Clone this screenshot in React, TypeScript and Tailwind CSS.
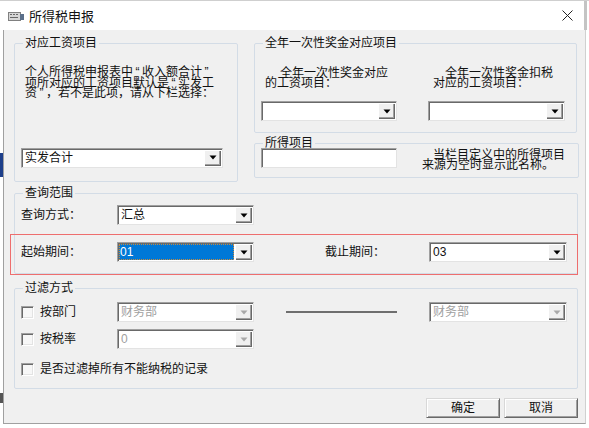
type ComboProps = {
  className: string;
  text?: string;
  disabled?: boolean;
  selected?: boolean;
};

function DropButton({ disabled }: { disabled?: boolean }) {
  return (
    <div className="flex h-full w-[17px] shrink-0 items-center justify-center bg-[#f0f0f0] shadow-[inset_1px_1px_0_#ffffff,inset_-1px_-1px_0_#696969,inset_-2px_-2px_0_#a0a0a0]">
      <svg width="8" height="5" viewBox="0 0 8 5">
        <polygon points="0.5,0.5 7.5,0.5 4,4.5" fill={disabled ? "#a8a8a8" : "#000"} />
      </svg>
    </div>
  );
}

function Combo({ className, text, disabled, selected }: ComboProps) {
  return (
    <div
      className={`flex h-[20px] shrink-0 border border-[#a0a0a0] border-r-[#e3e3e3] border-b-[#e3e3e3] bg-white p-[1px] shadow-[inset_1px_1px_0_#696969] ${className}`}
    >
      <div className="flex min-w-0 flex-1 items-center pr-[1px]">
        {selected ? (
          <span className="flex h-full flex-1 items-center bg-[#0078d7] pl-[1px] text-white outline outline-1 -outline-offset-1 outline-dotted outline-[#c88a3c]">
            {text}
          </span>
        ) : (
          <span className={`pl-[2px] ${disabled ? "text-[#a0a0a0]" : ""}`}>{text}</span>
        )}
      </div>
      <DropButton disabled={disabled} />
    </div>
  );
}

function Group({
  title,
  className,
  children,
}: {
  title: string;
  className: string;
  children: React.ReactNode;
}) {
  return (
    <fieldset className={`shrink-0 rounded-[2px] border border-[#d3dce6] px-[6px] ${className}`}>
      <legend className="ml-[2px] px-[2px] leading-[12px]">{title}</legend>
      {children}
    </fieldset>
  );
}

function CheckBox() {
  return (
    <span className="h-[13px] w-[13px] shrink-0 border border-[#a0a0a0] border-r-white border-b-white bg-[#f7f7f7] shadow-[inset_1px_1px_0_#696969,inset_-1px_-1px_0_#e3e3e3]" />
  );
}

function WinButton({ label }: { label: string }) {
  return (
    <button className="flex h-[20px] w-[74px] items-center justify-center border border-[#d8d8d8] border-r-[#696969] border-b-[#696969] bg-[#f0f0f0] shadow-[inset_1px_1px_0_#ffffff,inset_-1px_-1px_0_#a0a0a0]">
      {label}
    </button>
  );
}

// full-width quote marks, as the dialog's CJK font draws them
function Q({ c }: { c: string }) {
  return <span className="inline-block w-[9px] text-center">{c}</span>;
}

export default function App() {
  return (
    <div className="relative h-[428px] w-[589px] overflow-hidden bg-white font-['Liberation_Sans','Noto_Sans_CJK_SC',sans-serif] text-[12px] text-[#111]">
      {/* background windows peeking at the left edge */}
      <div className="absolute left-0 top-[153px] h-[24px] w-[3px] bg-[#1d3f8a]" />
      <div className="absolute left-0 top-[393px] h-[10px] w-[3px] bg-[#555]" />

      {/* Title bar */}
      <div className="flex h-[30px] items-center border-t border-[#cfcfcf]">
        <svg className="ml-[8px]" width="17" height="12" viewBox="0 0 17 12">
          <rect x="0.5" y="2.5" width="12" height="8" fill="#d6d6d6" stroke="#808080" />
          <rect x="2" y="4" width="2" height="1" fill="#666" />
          <rect x="5" y="4" width="2" height="1" fill="#666" />
          <rect x="8" y="4" width="2" height="1" fill="#666" />
          <rect x="2" y="7" width="8" height="1" fill="#666" />
          <rect x="12" y="4" width="4" height="6" fill="#5a6f8a" />
        </svg>
        <span className="ml-[4px] text-[13px] font-['Noto_Sans_CJK_SC',sans-serif]">所得税申报</span>
        <svg className="ml-auto mr-[11px]" width="11" height="11" viewBox="0 0 11 11">
          <path d="M0.5 0.5 L10.5 10.5 M10.5 0.5 L0.5 10.5" stroke="#222" strokeWidth="1" />
        </svg>
        <div className="mr-[2px] h-full w-[3px] bg-[#c4c4c4]" />
      </div>

      {/* Dialog body */}
      <div className="ml-[3px] h-[394px] w-[583px] border border-t-0 border-[#a0a0a0] border-r-[#d0d0d0] bg-[#f0f0f0] pl-[10px] pt-[7px]">
        {/* Row 1 */}
        <div className="flex gap-[16px]">
          <Group title="对应工资项目" className="h-[145px] w-[224px]">
            <p className="ml-[4px] mt-[18px] leading-[10.5px]">
              个人所得税申报表中<Q c="“" />收入额合计<Q c="”" />
              <br />
              项所对应的工资项目默认是<Q c="“" />实发工
              <br />
              资<Q c="”" />，若不是此项，请从下栏选择：
            </p>
            <Combo className="mt-[49px] w-[202px]" text="实发合计" />
          </Group>

          <div className="flex flex-col gap-[4px]">
            <Group title="全年一次性奖金对应项目" className="h-[96px] w-[323px]">
              <div className="flex gap-[31px]">
                <div className="w-[136px]">
                  <p className="mt-[19px] leading-[10px]">
                    <span className="block pl-[19px]">全年一次性奖金对应</span>
                    <span className="block pl-[4px]">的工资项目：</span>
                  </p>
                  <Combo className="mt-[13px] w-[136px]" />
                </div>
                <div className="w-[137px]">
                  <p className="mt-[19px] leading-[10px]">
                    <span className="block pl-[17px]">全年一次性奖金扣税</span>
                    <span className="block pl-[5px]">对应的工资项目：</span>
                  </p>
                  <Combo className="mt-[13px] w-[137px]" />
                </div>
              </div>
            </Group>

            <Group title="所得项目" className="h-[41px] w-[325px]">
              <div className="flex items-start">
                <div className="-mt-[1px] h-[20px] w-[136px] border border-[#a0a0a0] border-r-[#e3e3e3] border-b-[#e3e3e3] bg-white shadow-[inset_1px_1px_0_#696969]" />
                <p className="ml-[25px] mt-[1px] leading-[10px]">
                  <span className="block pl-[11px]">当栏目定义中的所得项目</span>
                  <span className="block">来源为空时显示此名称。</span>
                </p>
              </div>
            </Group>
          </div>
        </div>

        {/* Row 2: query range */}
        <Group title="查询范围" className="mt-[5px] h-[87px] w-[564px]">
          <div className="mt-[6px] flex items-center">
            <span className="w-[96px]">查询方式：</span>
            <Combo className="w-[137px]" text="汇总" />
          </div>
          <div className="mt-[17px] flex items-center">
            <span className="w-[96px]">起始期间：</span>
            <Combo className="w-[137px]" text="01" selected />
            <span className="ml-[71px] w-[104px]">截止期间：</span>
            <Combo className="w-[138px]" text="03" />
          </div>
        </Group>

        {/* Row 3: filter */}
        <Group title="过滤方式" className="mt-[8px] h-[107px] w-[564px]">
          <div className="mt-[8px] flex items-center">
            <div className="flex w-[96px] items-center gap-[6px]">
              <CheckBox />
              <span>按部门</span>
            </div>
            <Combo className="w-[137px]" text="财务部" disabled />
            <div className="ml-[32px] h-[2px] w-[111px] bg-[#6e6e6e]" />
            <Combo className="ml-[32px] w-[138px]" text="财务部" disabled />
          </div>
          <div className="mt-[7px] flex items-center">
            <div className="flex w-[96px] items-center gap-[6px]">
              <CheckBox />
              <span>按税率</span>
            </div>
            <Combo className="w-[137px]" text="0" disabled />
          </div>
          <div className="mt-[11px] flex items-center gap-[6px]">
            <CheckBox />
            <span>是否过滤掉所有不能纳税的记录</span>
          </div>
        </Group>

        <div className="mt-[9px] flex w-[564px] justify-end gap-[4px]">
          <WinButton label="确定" />
          <WinButton label="取消" />
        </div>
      </div>

      {/* red annotation frame */}
      <div className="pointer-events-none absolute left-[10px] top-[234px] h-[41px] w-[568px] border-[1.5px] border-[#ee6e6e]" />
    </div>
  );
}
